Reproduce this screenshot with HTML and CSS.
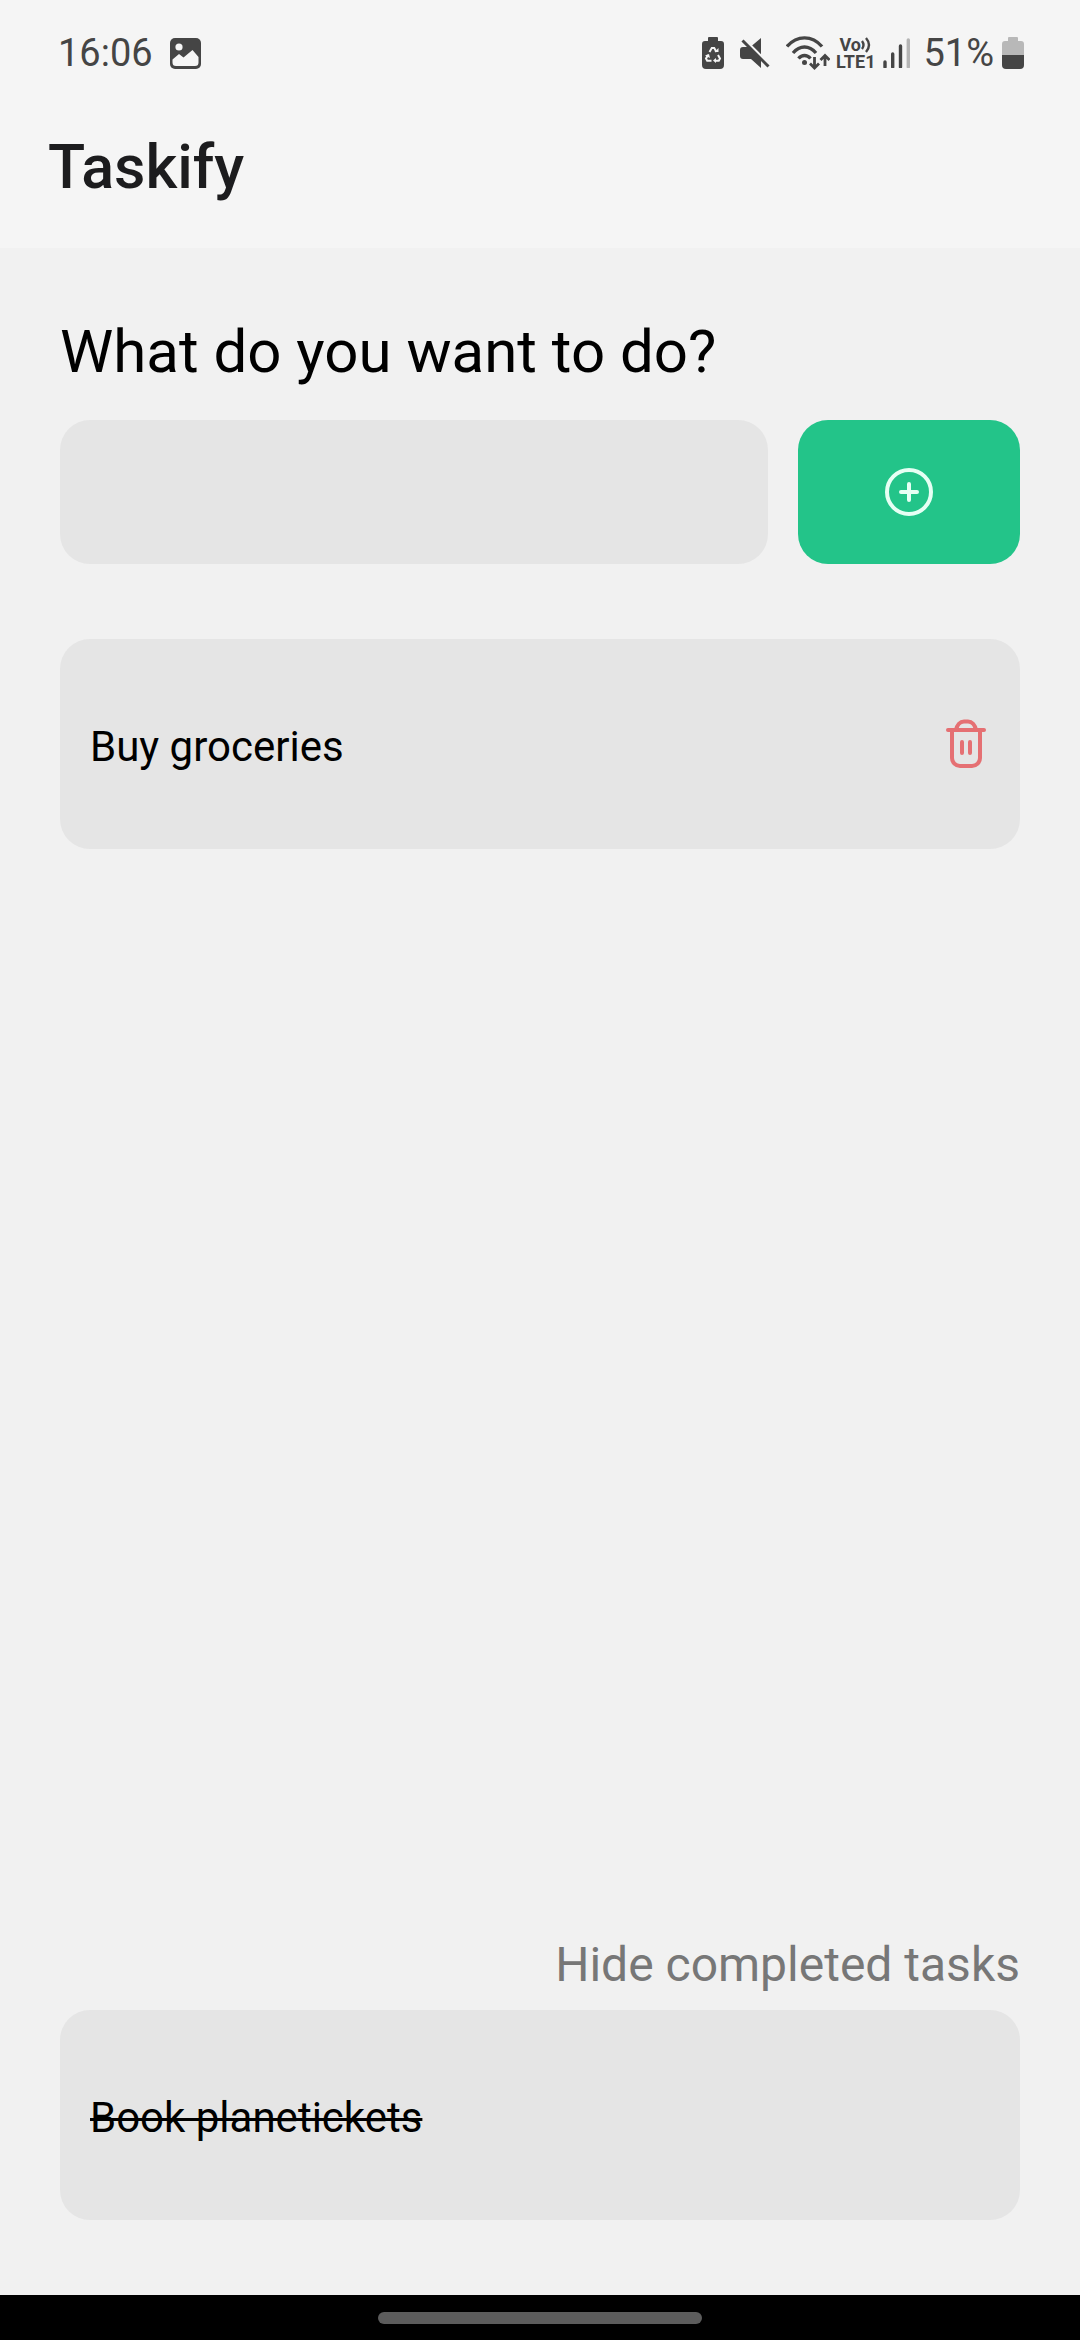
FILE: index.html
```html
<!DOCTYPE html>
<html lang="en">
<head>
  <meta charset="utf-8">
  <meta name="viewport" content="width=device-width, initial-scale=1">
  <title>Taskify</title>
  <link rel="stylesheet" href="styles.css">
</head>
<body>
  <div class="status-bar">
    <div class="status-left">
      <span class="status-text">16:06</span>
      <svg class="icon" width="32" height="32" viewBox="0 0 32 32" aria-hidden="true">
        <rect x="1" y="1" width="31" height="31" rx="5" fill="#454545"/>
        <circle cx="10" cy="10" r="3.6" fill="#f5f5f5"/>
        <path d="M3.500 22.500L10 17l4.500 3.500L23.500 13l6 7v5.500a3.500 3.500 0 0 1-3.500 3.500H7a3.500 3.500 0 0 1-3.500-3.500z" fill="#f5f5f5"/>
      </svg>
    </div>
    <div class="status-right">
      <svg class="icon" width="22" height="32" viewBox="0 0 22 32" aria-hidden="true">
        <path d="M7 0h8a1 1 0 0 1 1 1v3h3a3 3 0 0 1 3 3v21a4 4 0 0 1-4 4H4a4 4 0 0 1-4-4V7a3 3 0 0 1 3-3h3V1a1 1 0 0 1 1-1z" fill="#454545"/>
        <path d="M7.500 15l2.300-4h2.400l2.300 4M16 18l2 3.500-1.200 2.200H13M9.500 23.700H5.200L4 21.500 6 18" fill="none" stroke="#f5f5f5" stroke-width="2"/>
        <path d="M12.500 15h4v-4zM14 21v5l-3-2.500zM3 18.500l4-1.500 1 4z" fill="#f5f5f5"/>
      </svg>
      <svg class="icon" width="30" height="30" viewBox="0 0 30 30" aria-hidden="true">
        <path d="M21 0v17L11.500 8zM3 9h6l12 12v9L11 21H3a3 3 0 0 1-3-3v-6a3 3 0 0 1 3-3z" fill="#454545"/>
        <path d="M3.500 1.500l26 26" stroke="#f5f5f5" stroke-width="4"/>
        <path d="M2.500 2.500l26 26" stroke="#454545" stroke-width="3"/>
      </svg>
      <svg class="icon" width="44" height="34" viewBox="0 0 44 34" aria-hidden="true">
        <path d="M1 10.500C11-1 26-1 36 10.500M7 17c7-8 16-8 23 0M12.500 22.500c3.500-4 8.500-4 12 0" fill="none" stroke="#454545" stroke-width="3.400"/>
        <circle cx="18.500" cy="26.500" r="2.500" fill="#454545"/>
        <path d="M28.500 21v11M24 27.500l4.500 4.500 4.500-4.500M39 30V20M34.500 24l4.500-4.500 4.500 4.500" fill="none" stroke="#454545" stroke-width="2.800"/>
      </svg>
      <div class="network">
        <span class="network-line">Vo<svg width="11" height="16" viewBox="0 0 11 16" aria-hidden="true">
          <path d="M1 4q3 4 0 8M5 1q6 7 0 14" fill="none" stroke="#454545" stroke-width="2.400"/>
        </svg></span>
        <span class="network-line">LTE1</span>
      </div>
      <svg class="icon signal" width="28" height="30" viewBox="0 0 28 30" aria-hidden="true">
        <path d="M2 24v5M9.700 16v13M17.500 8v21" stroke="#454545" stroke-width="3.400" stroke-linecap="round"/>
        <path d="M25.300 2v27" stroke="#b5b5b5" stroke-width="3.400" stroke-linecap="round"/>
      </svg>
      <span class="status-text">51%</span>
      <svg class="icon battery" width="22" height="32" viewBox="0 0 22 32" aria-hidden="true">
        <path d="M7 0h8a1 1 0 0 1 1 1v3h3a3 3 0 0 1 3 3v11H0V7a3 3 0 0 1 3-3h3V1a1 1 0 0 1 1-1z" fill="#b8b8b8"/>
        <path d="M0 18h22v10a4 4 0 0 1-4 4H4a4 4 0 0 1-4-4z" fill="#454545"/>
      </svg>
    </div>
  </div>

  <header class="app-header">
    <h1 class="app-title">Taskify</h1>
  </header>

  <main class="content">
    <form class="add-form">
      <label class="add-label" for="new-task">What do you want to do?</label>
      <div class="add-row">
        <input class="add-input" id="new-task" type="text" autocomplete="off">
        <button class="add-button" type="button" aria-label="Add task">
          <svg width="48" height="48" viewBox="0 0 48 48" fill="none" stroke="#e6fff4" stroke-width="4" stroke-linecap="round" aria-hidden="true">
            <circle cx="24" cy="24" r="22"/>
            <path d="M24 16v16M16 24h16"/>
          </svg>
        </button>
      </div>
    </form>

    <ul class="task-list">
      <li class="task">
        <span class="task-name">Buy groceries</span>
        <button class="delete-button" type="button" aria-label="Delete task">
          <svg class="trash" width="48" height="48" viewBox="0 0 48 48" fill="none" stroke="#e57073" stroke-width="4" stroke-linecap="round" aria-hidden="true">
            <path d="M6 10h36"/>
            <path d="M14 10c1-5 4-8.500 8-8.500h4c4 0 7 3.500 8 8.500"/>
            <path d="M10 10v28a8 8 0 0 0 8 8h12a8 8 0 0 0 8-8V10"/>
            <path d="M20 22v11M28 22v11"/>
          </svg>
        </button>
      </li>
    </ul>

    <section class="completed">
      <button class="toggle-button" type="button">Hide completed tasks</button>
      <ul class="task-list">
        <li class="task">
          <span class="task-name task-done">Book planetickets</span>
        </li>
      </ul>
    </section>
  </main>

  <div class="nav-bar"><div class="nav-handle"></div></div>
</body>
</html>
```

FILE: styles.css
```css
* {
  box-sizing: border-box;
}

body {
  margin: 0;
  min-height: 100vh;
  display: flex;
  flex-direction: column;
  background: #f1f1f1;
  color: #000;
  font-family: Roboto, "Noto Sans", sans-serif;
}

button,
input {
  border: 0;
  margin: 0;
  padding: 0;
  font: inherit;
  background: none;
}

svg {
  display: block;
  flex: none;
}

/* System status bar */
.status-bar {
  display: flex;
  justify-content: space-between;
  align-items: center;
  height: 106px;
  padding: 0 56px;
  background: #f5f5f5;
  color: #454545;
}

.status-left,
.status-right {
  display: flex;
  align-items: center;
  gap: 16px;
}

.status-left {
  padding-left: 2px;
}

.status-text {
  font-size: 38px;
  line-height: 44px;
}

.network {
  margin-left: -10px;
  font-size: 18px;
  line-height: 17px;
  font-weight: 700;
}

.network-line {
  display: flex;
  align-items: center;
  justify-content: center;
}

.signal {
  margin: 0 -4px 0 -8px;
}

.battery {
  margin-left: -8px;
}

/* App header */
.app-header {
  padding: 26px 48px 46px;
  background: #f5f5f5;
}

.app-title {
  margin: 0;
  font-size: 61px;
  line-height: 70px;
  font-weight: 500;
  color: #1c1c1e;
}

/* Content */
.content {
  flex: 1;
  display: flex;
  flex-direction: column;
  padding: 68px 60px 75px;
}

.add-form {
  display: flex;
  flex-direction: column;
  gap: 32px;
  margin-bottom: 75px;
}

.add-label {
  font-size: 60px;
  line-height: 72px;
}

.add-row {
  display: flex;
  gap: 30px;
}

.add-input {
  flex: 1;
  min-width: 0;
  height: 144px;
  padding: 0 30px;
  border-radius: 30px;
  background: #e5e5e5;
  font-size: 42px;
}

.add-button {
  display: flex;
  align-items: center;
  justify-content: center;
  width: 222px;
  border-radius: 30px;
  background: #23c489;
}

.task-list {
  display: flex;
  flex-direction: column;
  gap: 30px;
  margin: 0;
  padding: 0;
  list-style: none;
}

.task {
  display: flex;
  align-items: center;
  justify-content: space-between;
  min-height: 210px;
  padding: 0 30px;
  border-radius: 30px;
  background: #e5e5e5;
}

.task-name {
  padding-top: 6px;
  font-size: 42px;
  line-height: 50px;
}

.task-done {
  text-decoration: line-through;
  text-decoration-thickness: 3px;
}

.trash {
  overflow: visible;
}

.completed {
  display: flex;
  flex-direction: column;
  gap: 16px;
  margin-top: auto;
}

.toggle-button {
  align-self: flex-end;
  font-size: 48px;
  line-height: 58px;
  color: #777;
}

/* System navigation bar */
.nav-bar {
  display: flex;
  align-items: center;
  justify-content: center;
  height: 45px;
  background: #000;
}

.nav-handle {
  width: 30%;
  height: 12px;
  border-radius: 6px;
  background: #5c5c5c;
}
```
